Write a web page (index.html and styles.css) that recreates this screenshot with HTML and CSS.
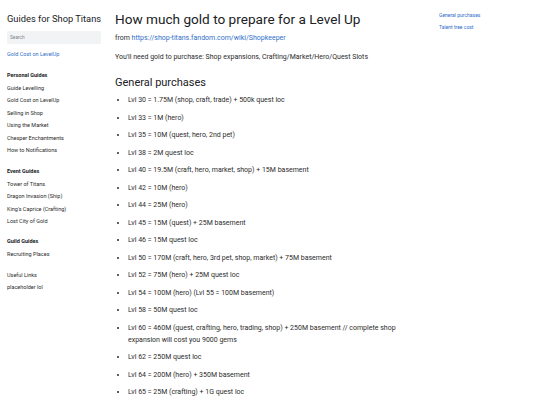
FILE: index.html
```html
<!DOCTYPE html>
<html>
<head>
<meta charset="utf-8">
<link rel="stylesheet" href="styles.css">
</head>
<body>
<div class="layout">
  <aside class="sidebar">
    <div class="site-title">Guides for Shop Titans</div>
    <div class="search">Search</div>
    <a class="current" href="#">Gold Cost on LevelUp</a>
    <div class="group">
      <div class="group-title">Personal Guides</div>
      <div class="item">Guide Levelling</div>
      <div class="item">Gold Cost on LevelUp</div>
      <div class="item">Selling in Shop</div>
      <div class="item">Using the Market</div>
      <div class="item">Chesper Enchantments</div>
      <div class="item">How to Notifications</div>
    </div>
    <div class="group">
      <div class="group-title">Event Guides</div>
      <div class="item">Tower of Titans</div>
      <div class="item">Dragon Invasion (Ship)</div>
      <div class="item">King's Caprice (Crafting)</div>
      <div class="item">Lost City of Gold</div>
    </div>
    <div class="group">
      <div class="group-title">Guild Guides</div>
      <div class="item">Recruiting Places</div>
    </div>
    <div class="group">
      <div class="item">Useful Links</div>
      <div class="item">placeholder lol</div>
    </div>
  </aside>
  <main class="content">
    <h1 class="page-title">How much gold to prepare for a Level Up</h1>
    <p class="para">from <a href="#">https://shop-titans.fandom.com/wiki/Shopkeeper</a></p>
    <p class="para para-gap">You'll need gold to purchase: Shop expansions, Crafting/Market/Hero/Quest Slots</p>
    <h2 class="section-title">General purchases</h2>
    <ul class="list">
      <li>Lvl 30 = 1.75M (shop, craft, trade) + 500k quest loc</li>
      <li>Lvl 33 = 1M (hero)</li>
      <li>Lvl 35 = 10M (quest, hero, 2nd pet)</li>
      <li>Lvl 38 = 2M quest loc</li>
      <li>Lvl 40 = 19.5M (craft, hero, market, shop) + 15M basement</li>
      <li>Lvl 42 = 10M (hero)</li>
      <li>Lvl 44 = 25M (hero)</li>
      <li>Lvl 45 = 15M (quest) + 25M basement</li>
      <li>Lvl 46 = 15M quest loc</li>
      <li>Lvl 50 = 170M (craft, hero, 3rd pet, shop, market) + 75M basement</li>
      <li>Lvl 52 = 75M (hero) + 25M quest loc</li>
      <li>Lvl 54 = 100M (hero) (Lvl 55 = 100M basement)</li>
      <li>Lvl 58 = 50M quest loc</li>
      <li>Lvl 60 = 460M (quest, crafting, hero, trading, shop) + 250M basement // complete shop expansion will cost you 9000 gems</li>
      <li>Lvl 62 = 250M quest loc</li>
      <li>Lvl 64 = 200M (hero) + 350M basement</li>
      <li>Lvl 65 = 25M (crafting) + 1G quest loc</li>
    </ul>
  </main>
  <nav class="toc">
    <a href="#">General purchases</a>
    <a href="#">Talent tree cost</a>
  </nav>
</div>
</body>
</html>
```
FILE: styles.css
```css
html, body {
  margin: 0;
  padding: 0;
  background: #ffffff;
  font-family: Roboto, "Liberation Sans", sans-serif;
  color: #2b2b2b;
  overflow: hidden;
}
a { color: #2f6fc9; text-decoration: none; }
.layout {
  display: flex;
  align-items: flex-start;
  width: 540px;
  height: 405px;
}
.sidebar {
  width: 94px;
  padding: 12px 0 0 7px;
  flex-shrink: 0;
  display: flex;
  flex-direction: column;
}
.site-title {
  font-size: 9.3px;
  line-height: 14px;
  color: #202124;
  white-space: nowrap;
}
.search {
  margin-top: 5px;
  height: 13px;
  background: #f1f3f4;
  font-size: 4.8px;
  line-height: 13px;
  color: #80868b;
  padding-left: 3px;
  border-radius: 1px;
}
.current {
  margin-top: 4px;
  font-size: 5.5px;
  line-height: 13px;
}
.group {
  margin-top: 7.5px;
  display: flex;
  flex-direction: column;
}
.group-title {
  font-size: 5.5px;
  font-weight: bold;
  line-height: 13px;
  color: #202124;
}
.item {
  font-size: 5.5px;
  line-height: 12.6px;
  white-space: nowrap;
}
.content {
  width: 309px;
  margin-left: 14px;
  padding-top: 8px;
  flex-shrink: 0;
}
.page-title {
  margin: 0;
  font-size: 13.6px;
  font-weight: normal;
  line-height: 23px;
  white-space: nowrap;
  color: #202124;
}
.para {
  margin: 0;
  font-size: 7px;
  line-height: 14px;
}
.para-gap {
  margin-top: 4.5px;
}
.section-title {
  margin: 11.5px 0 0;
  font-size: 11px;
  font-weight: normal;
  line-height: 16px;
  color: #202124;
}
.list {
  margin: -2.5px 0 0;
  padding-left: 13px;
  font-size: 7px;
  line-height: 12px;
}
.list li {
  margin-top: 5.5px;
}
.toc {
  margin-left: 15px;
  padding-top: 9px;
  display: flex;
  flex-direction: column;
}
.toc a {
  font-size: 5px;
  line-height: 12px;
  white-space: nowrap;
}
```
